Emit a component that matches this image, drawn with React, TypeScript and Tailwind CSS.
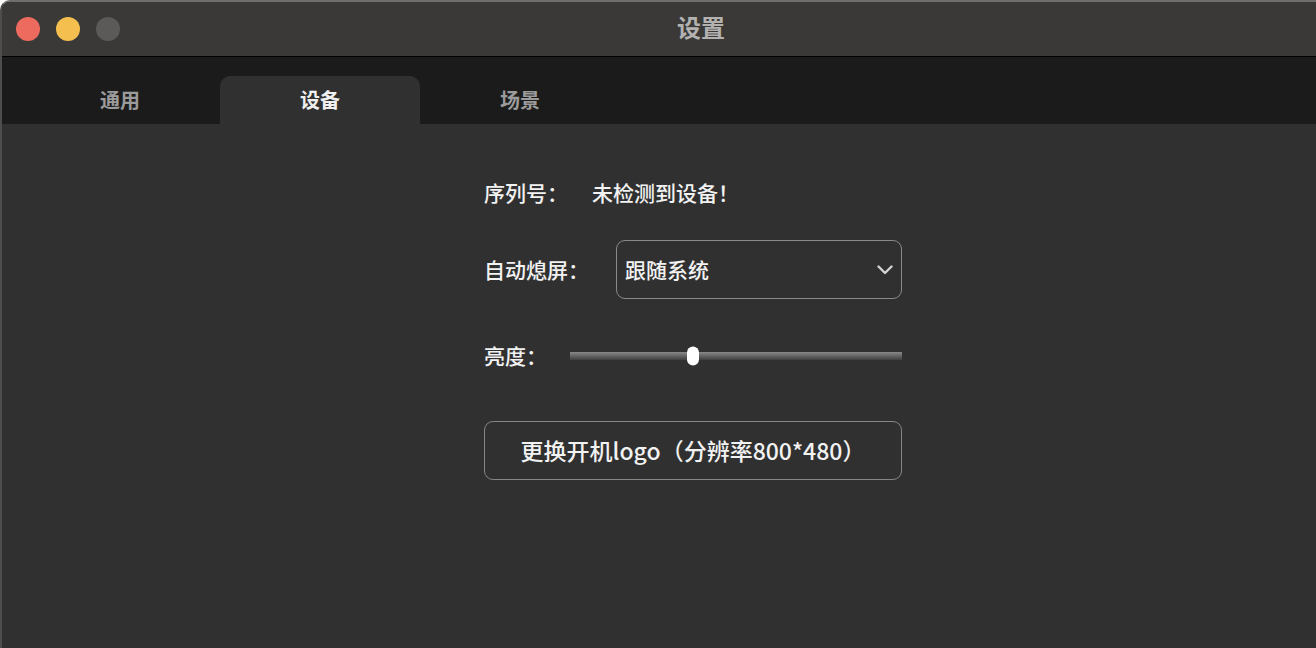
const font = { fontFamily: '"Noto Sans CJK SC", "Noto Sans", sans-serif' };

function TrafficLights() {
    return (
        <div className="flex items-center gap-4 pb-px pl-[14px]">
            <span className="h-6 w-6 rounded-full bg-[#ed6a5e]" />
            <span className="h-6 w-6 rounded-full bg-[#f5bf4f]" />
            <span className="h-6 w-6 rounded-full bg-[#5b5a59]" />
        </div>
    );
}

const tabs = ["通用", "设备", "场景"];

export default function App() {
    const active = 1;
    const brightness = 37;

    return (
        <div
            className="flex h-[648px] w-[1316px] flex-col overflow-hidden rounded-tl-[10px] border-l-2 border-t-2 border-l-[#4d4d4d] border-t-[#6f6e6c] bg-[#303030]"
            style={font}
        >
            {/* Title bar */}
            <div className="relative flex h-[54px] shrink-0 items-center bg-[#3a3937]">
                <TrafficLights />
                <div className="absolute inset-0 flex items-center justify-center pb-1 pl-[84px] text-[24px] font-bold text-[#b3b2b1]">
                    设置
                </div>
            </div>
            <div className="h-px shrink-0 bg-black" />

            {/* Tabs */}
            <div className="flex h-[67px] shrink-0 items-end bg-[#1b1b1b] pl-[18px]">
                {tabs.map((t, i) => (
                    <div
                        key={t}
                        className={`flex h-12 w-[200px] items-center justify-center rounded-t-[10px] text-[20px] font-bold ${
                            i === active ? "bg-[#303030] text-[#f0f0f0]" : "text-[#9b9b9b]"
                        }`}
                    >
                        {t}
                    </div>
                ))}
            </div>

            {/* Content */}
            <div className="flex flex-1 justify-center pl-[68px]">
                <div className="flex w-[418px] flex-col pt-[52px] text-[21px] font-medium text-[#f2f2f2]">
                    <div className="flex h-[33px] items-center">
                        <span className="w-[108px]">序列号：</span>
                        <span>未检测到设备！</span>
                    </div>

                    <div className="mt-[31px] flex items-center">
                        <span className="w-[132px]">自动熄屏：</span>
                        <div className="flex h-[59px] flex-1 items-center justify-between rounded-[9px] border-[1.5px] border-[#8a8a8a] pl-2 pr-2">
                            <span>跟随系统</span>
                            <svg width="16" height="10" viewBox="0 0 16 10" fill="none" className="text-[#d4d4d4]">
                                <path d="M1.5 1.5 8 8l6.5-6.5" stroke="currentColor" strokeWidth="2.4" strokeLinecap="round" strokeLinejoin="round" />
                            </svg>
                        </div>
                    </div>

                    <div className="mt-[40px] flex h-[33px] items-center">
                        <span className="w-[86px]">亮度：</span>
                        <div className="relative h-2 flex-1 bg-gradient-to-b from-[#8a8a8a] to-[#3f3f3f]">
                            <span
                                className="absolute top-1/2 h-[19px] w-3 -translate-x-1/2 -translate-y-1/2 rounded-full bg-white"
                                style={{ left: `${brightness}%` }}
                            />
                        </div>
                    </div>

                    <button className="mt-[49px] flex h-[59px] w-full items-center justify-center rounded-[9px] border-[1.5px] border-[#858585] text-[23px] font-medium text-[#f2f2f2]">
                        更换开机logo（分辨率800*480）
                    </button>
                </div>
            </div>
        </div>
    );
}
